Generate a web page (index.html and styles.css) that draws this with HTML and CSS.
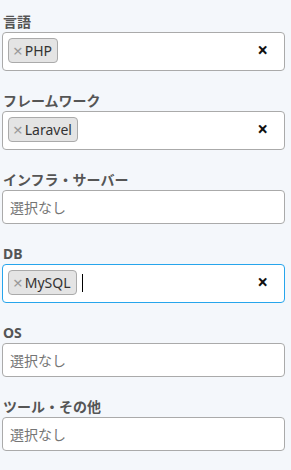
FILE: index.html
```html
<!DOCTYPE html>
<html>

<head>
    <title>Skills</title>
    <link rel="stylesheet" href="styles.css">
</head>

<body>
    <div class="form">
        <div class="field">
            <label class="field-label">言語</label>
            <div class="select">
                <span class="tag"><span class="tag-x">×</span>PHP</span>
                <span class="clear">×</span>
            </div>
        </div>

        <div class="field">
            <label class="field-label">フレームワーク</label>
            <div class="select">
                <span class="tag"><span class="tag-x">×</span>Laravel</span>
                <span class="clear">×</span>
            </div>
        </div>

        <div class="field">
            <label class="field-label">インフラ・サーバー</label>
            <div class="select empty">
                <span class="placeholder">選択なし</span>
            </div>
        </div>

        <div class="field">
            <label class="field-label">DB</label>
            <div class="select focused">
                <span class="tag"><span class="tag-x">×</span>MySQL</span>
                <span class="cursor"></span>
                <span class="clear">×</span>
            </div>
        </div>

        <div class="field">
            <label class="field-label">OS</label>
            <div class="select empty">
                <span class="placeholder">選択なし</span>
            </div>
        </div>

        <div class="field">
            <label class="field-label">ツール・その他</label>
            <div class="select empty">
                <span class="placeholder">選択なし</span>
            </div>
        </div>
    </div>
</body>

</html>
```

FILE: styles.css
```css
* {
    box-sizing: border-box;
}

body {
    margin: 0;
    background-color: #f4f7fb;
    font-family: 'Noto Sans', 'Noto Sans CJK JP', sans-serif;
}

.form {
    padding: 12px 6px 0 2px;
}

.field {
    margin-bottom: 20px;
}

.field-label {
    display: block;
    height: 20px;
    padding-left: 1px;
    font-size: 14px;
    line-height: 20px;
    font-weight: 700;
    color: #555;
}

.select {
    display: flex;
    align-items: center;
    min-height: 34px;
    padding: 5px 5px 7px 5px;
    background-color: #fff;
    border: 1px solid #aaa;
    border-radius: 4px;
}

.select.empty {
    padding: 0 5px;
}

.select.focused {
    border-color: #26a5ec;
}

.tag {
    display: inline-flex;
    align-items: center;
    height: 25px;
    padding: 0 5px 0 4px;
    font-size: 14px;
    color: #333;
    background-color: #e4e4e4;
    border: 1px solid #aaa;
    border-radius: 4px;
}

.tag-x {
    margin-right: 2px;
    font-size: 17px;
    line-height: 1;
    color: #999;
}

.cursor {
    width: 1px;
    height: 18px;
    margin-left: 5px;
    background-color: #000;
}

.clear {
    margin-left: auto;
    margin-right: 11px;
    font-size: 19px;
    line-height: 1;
    font-weight: 700;
    color: #111;
}

.placeholder {
    padding-left: 2px;
    font-size: 14px;
    color: #757575;
}
```
